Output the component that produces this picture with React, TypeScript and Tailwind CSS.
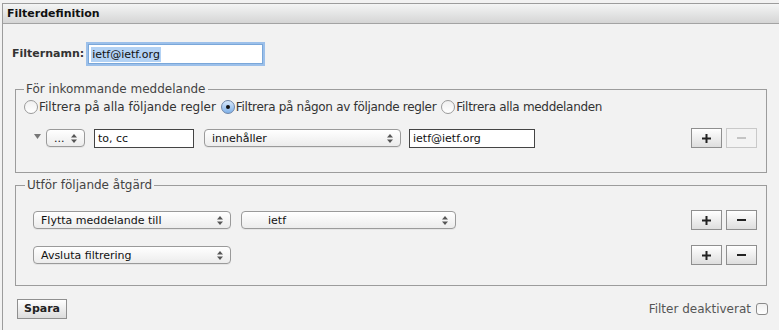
import React from "react";

const font = { fontFamily: '"DejaVu Sans", Verdana, sans-serif' };

function Arrows() {
  return (
    <svg width="6" height="9" viewBox="0 0 6 9" className="shrink-0">
      <path d="M3 0 L6 3.5 L0 3.5 Z" fill="#555" />
      <path d="M3 9 L6 5.5 L0 5.5 Z" fill="#555" />
    </svg>
  );
}

function Select({ label, w, indent = false }: { label: string; w: string; indent?: boolean }) {
  return (
    <div
      className={`${w} h-[18px] flex items-center justify-between rounded-[4px] border border-[#9a9a9a] bg-gradient-to-b from-white to-[#ececec] pr-[7px] ${indent ? "pl-[26px]" : "pl-[7px]"} text-[11px] text-[#111] shadow-[0_1px_0_rgba(0,0,0,0.05)]`}
    >
      <span className="leading-none">{label}</span>
      <Arrows />
    </div>
  );
}

function PlusMinus({ minusDisabled = false }: { minusDisabled?: boolean }) {
  return (
    <div className="flex gap-[4px] ml-auto">
      <button className="w-[31px] h-[20px] flex items-center justify-center border border-[#8f8f8f] bg-gradient-to-b from-white to-[#dedede]">
        <svg width="9" height="9" viewBox="0 0 9 9">
          <path d="M4.5 0 V9 M0 4.5 H9" stroke="#222" strokeWidth="2" />
        </svg>
      </button>
      <button
        className={`w-[31px] h-[20px] flex items-center justify-center border ${minusDisabled ? "border-[#c9c9c9] bg-[#f3f3f3]" : "border-[#8f8f8f] bg-gradient-to-b from-white to-[#dedede]"}`}
      >
        <svg width="9" height="2" viewBox="0 0 9 2">
          <path d="M0 1 H9" stroke={minusDisabled ? "#c4c4c4" : "#222"} strokeWidth="2" />
        </svg>
      </button>
    </div>
  );
}

function Radio({ checked, label, tight }: { checked?: boolean; label: string; tight?: boolean }) {
  return (
    <label className="flex items-center gap-[1px]">
      {checked ? (
        <span className="w-[14px] h-[14px] rounded-full border border-[#6f86a8] bg-gradient-to-b from-[#d7e8fb] to-[#7fb1e8] flex items-center justify-center">
          <span className="w-[4px] h-[4px] rounded-full bg-[#111]" />
        </span>
      ) : (
        <span className="w-[14px] h-[14px] rounded-full border border-[#9a9a9a] bg-gradient-to-b from-[#f0f0f0] to-white" />
      )}
      <span className={`text-[12px] text-[#333] ${tight ? "tracking-[-0.3px]" : ""}`}>{label}</span>
    </label>
  );
}

export default function App() {
  return (
    <div className="w-[779px] h-[330px] overflow-hidden bg-[#f2f2f2] pt-[3px] pl-[2px]" style={font}>
      <div className="h-[330px] border-l border-t border-[#9c9c9c]">
        {/* header */}
        <div className="h-[20px] border-b border-[#a3a3a3] bg-gradient-to-b from-[#f4f5f5] to-[#d5d5d5] pl-[4px] text-[11px] font-bold leading-[20px] text-[#111]">
          Filterdefinition
        </div>

        <div className="pl-[12px] pr-[12px]">
          {/* name */}
          <div className="flex items-center gap-[4px] mt-[20px] -ml-[3px]">
            <span className="text-[11px] font-bold text-[#333]">Filternamn:</span>
            <div className="w-[175px] h-[20px] border border-[#7aa7d9] bg-white shadow-[0_0_0_2px_#9cc0ea] flex items-center pl-[2px]">
              <span className="bg-[#b3d2f4] text-[11px] text-[#111] leading-[15px] px-[1px]">ietf@ietf.org</span>
            </div>
          </div>

          {/* incoming */}
          <fieldset className="mt-[16px] border border-[#9c9c9c] h-[93px] pl-[8px] pr-[9px]">
            <legend className="px-[2px] text-[12px] text-[#444]">För inkommande meddelande</legend>
            <div className="flex items-center gap-[5px]">
              <Radio label="Filtrera på alla följande regler" />
              <Radio checked tight label="Filtrera på någon av följande regler" />
              <Radio tight label="Filtrera alla meddelanden" />
            </div>
            <div className="flex items-center mt-[12px]">
              <svg width="7" height="5" viewBox="0 0 7 5" className="ml-[10px] mr-[5px] -mt-[4px]">
                <path d="M0 0 H7 L3.5 5 Z" fill="#777" />
              </svg>
              <Select label="..." w="w-[39px]" />
              <div className="ml-[9px] w-[100px] h-[19px] border border-[#444] bg-white text-[11px] text-[#111] pl-[3px] leading-[17px]">to, cc</div>
              <div className="ml-[10px]">
                <Select label="innehåller" w="w-[197px]" />
              </div>
              <div className="ml-[8px] w-[126px] h-[19px] border border-[#444] bg-white text-[11px] text-[#111] pl-[3px] leading-[17px]">ietf@ietf.org</div>
              <PlusMinus minusDisabled />
            </div>
          </fieldset>

          {/* actions */}
          <fieldset className="mt-[3px] border border-[#9c9c9c] h-[110px] pl-[17px] pr-[9px]">
            <legend className="ml-[-8px] mx-[8px] px-[2px] text-[12px] text-[#444]">Utför följande åtgärd</legend>
            <div className="flex items-center mt-[16px]">
              <Select label="Flytta meddelande till" w="w-[198px]" />
              <div className="ml-[10px]">
                <Select label="ietf" indent w="w-[215px]" />
              </div>
              <PlusMinus />
            </div>
            <div className="flex items-center mt-[15px]">
              <Select label="Avsluta filtrering" w="w-[198px]" />
              <PlusMinus />
            </div>
          </fieldset>
        </div>

        {/* footer */}
        <div className="flex items-center justify-between pl-[14px] pr-[11px] mt-[13px]">
          <button className="w-[50px] h-[20px] border border-[#8f8f8f] bg-gradient-to-b from-white to-[#dcdcdc] text-[11px] font-bold text-[#222]">
            Spara
          </button>
          <label className="flex items-center gap-[5px]">
            <span className="text-[12px] text-[#555]">Filter deaktiverat</span>
            <span className="w-[12px] h-[12px] rounded-[3px] border border-[#8a8a8a] bg-gradient-to-b from-[#f0f0f0] to-white" />
          </label>
        </div>
      </div>
    </div>
  );
}
